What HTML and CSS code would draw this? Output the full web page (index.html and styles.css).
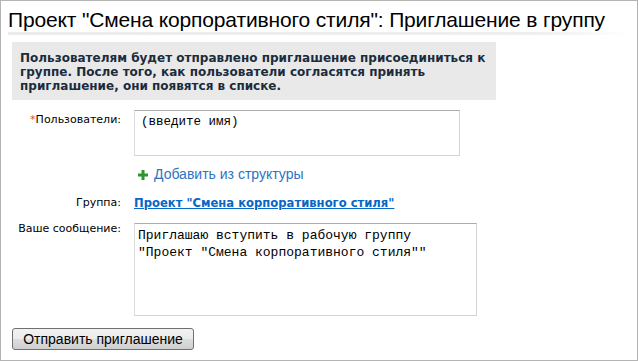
FILE: index.html
```html
<html>
<head><title>Приглашение в группу</title>
<link rel="stylesheet" href="styles.css">
</head>
<body>
<div class="page">
  <h1>Проект "Смена корпоративного стиля": Приглашение в группу</h1>
  <div class="rule"></div>

  <div class="notice">Пользователям будет отправлено приглашение присоединиться к группе. После того, как пользователи согласятся принять приглашение, они появятся в списке.</div>

  <div class="form">
    <div class="label"><span class="req">*</span>Пользователи:</div>
    <div class="field">
      <textarea class="users">(введите имя)</textarea>
      <a class="add" href="#"><svg class="plus" width="10" height="10" viewBox="0 0 10 10"><rect x="3.5" y="0" width="3" height="10" fill="#2c962c"/><rect x="0" y="3.5" width="10" height="3" fill="#2c962c"/></svg>Добавить из структуры</a>
    </div>

    <div class="label group-label">Группа:</div>
    <div class="field group-field"><a class="group" href="#">Проект "Смена корпоративного стиля"</a></div>

    <div class="label message-label">Ваше сообщение:</div>
    <div class="field">
      <textarea class="message">Приглашаю вступить в рабочую группу
"Проект "Смена корпоративного стиля""</textarea>
    </div>
  </div>

  <button class="send">Отправить приглашение</button>
</div>
</body>
</html>
```

FILE: styles.css
```css
body {
margin: 0;
padding: 0;
background: #ffffff;
}

.page {
width: 638px;
height: 361px;
box-sizing: border-box;
border: 1px solid #b4b4b4;
padding: 0 7px 0 7px;
overflow: hidden;
}

h1 {
font-family: "Liberation Sans", Arial, sans-serif;
font-size: 21px;
letter-spacing: -0.15px;
font-weight: normal;
color: #000000;
margin: 6px 0 0 0;
line-height: 25px;
white-space: nowrap;
}

.rule {
height: 3px;
margin-top: 0;
background: linear-gradient(to right, #ececec 0%, #efefef 85%, #ffffff 100%);
}

.notice {
width: 468px;
margin: 7px 0 0 4px;
padding: 9px 8px 7px 8px;
background: #e9e9e9;
font-family: "DejaVu Sans", Verdana, sans-serif;
font-size: 12px;
font-weight: bold;
line-height: 14px;
color: #1b2c3c;
}

.form {
display: grid;
grid-template-columns: 113px 1fr;
column-gap: 13px;
margin-top: 10px;
font-family: "DejaVu Sans", Verdana, sans-serif;
font-size: 11px;
color: #000000;
}

.label {
text-align: right;
padding-top: 3px;
line-height: 14px;
}

.req {
color: #e0502a;
}

.field {
display: flex;
flex-direction: column;
align-items: flex-start;
}

textarea {
box-sizing: border-box;
border: 1px solid #d4d4d4;
border-top-color: #acacac;
border-left-color: #dedede;
padding: 3px;
font-family: "Liberation Mono", "Courier New", monospace;
font-size: 13px;
line-height: 17px;
color: #000000;
resize: none;
margin: 0;
}

.users {
width: 326px;
height: 46px;
padding: 3px 6px;
font-size: 12.5px;
}

.add {
display: flex;
align-items: center;
margin: 10px 0 0 4px;
font-family: "Liberation Sans", Arial, sans-serif;
font-size: 14px;
line-height: 17px;
color: #2b73c4;
text-decoration: none;
}

.plus {
margin-right: 6px;
}

.group-label,
.group-field {
margin-top: 9px;
}

.group-label {
padding-top: 4px;
}

.group-field {
padding-top: 4px;
line-height: 14px;
font-size: 11.6px;
}

.group {
color: #0866c6;
font-weight: bold;
}

.message-label {
margin-top: 12px;
padding-top: 0;
}

.field .message {
width: 343px;
height: 93px;
margin-top: 13px;
}

.send {
margin: 12px 0 0 4px;
width: 182px;
height: 22px;
padding: 0;
border: 1px solid #707070;
border-radius: 3px;
background: linear-gradient(#f2f2f2 0%, #ebebeb 50%, #dddddd 51%, #cfcfcf 100%);
font-family: "Liberation Sans", Arial, sans-serif;
font-size: 14px;
color: #000000;
}
```
